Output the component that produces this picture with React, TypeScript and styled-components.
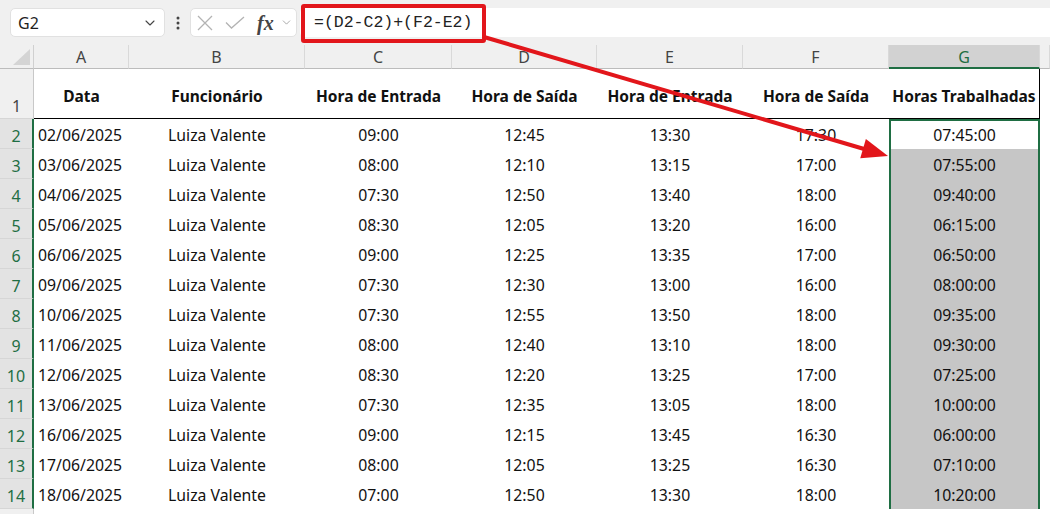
import React from "react";
import styled, { createGlobalStyle, css } from "styled-components";
import { ChevronDown } from "lucide-react";

const GlobalStyle = createGlobalStyle`
  html, body { margin: 0; padding: 0; background: #f0f0f0; }
  body { font-family: "Noto Sans", "Liberation Sans", sans-serif; overflow: hidden; }
  * { box-sizing: border-box; }
`;

const GREEN = "#1f6e43";

const Page = styled.div`
  position: relative;
  width: 1050px;
  height: 514px;
  overflow: hidden;
  background: #f0f0f0;
`;

const FormulaBar = styled.div`
  display: flex;
  align-items: center;
  height: 45px;
  padding: 8px 0 8px 10px;
`;

const NameBox = styled.div`
  display: flex;
  align-items: center;
  justify-content: space-between;
  width: 155px;
  height: 29px;
  background: #fff;
  border: 1px solid #e1e1e1;
  border-radius: 5px;
  padding: 0 6px 0 7px;
  font-size: 16px;
  color: #1f1f1f;
`;

const Dots = styled.div`
  width: 25px;
  display: flex;
  justify-content: center;
  color: #444;
`;

const FxBox = styled.div`
  display: flex;
  align-items: center;
  gap: 12px;
  width: 107px;
  height: 29px;
  background: #fff;
  border: 1px solid #e1e1e1;
  border-radius: 5px;
  padding: 0 3px 0 6px;
`;

const FxText = styled.span`
  font-family: "Liberation Serif", serif;
  font-style: italic;
  font-weight: bold;
  font-size: 20px;
  color: #444;
  line-height: 1;
  margin-right: -6px;
`;

const FormulaInput = styled.div`
  flex: 1;
  height: 29px;
  margin-left: 3px;
  background: #fff;
  border-radius: 5px 0 0 5px;
  display: flex;
  align-items: center;
  padding-left: 14px;
`;

const FormulaText = styled.span`
  font-family: "Liberation Mono", "DejaVu Sans Mono", monospace;
  font-size: 16.5px;
  color: #222;
`;

const Sheet = styled.div`
  display: grid;
  grid-template-columns: 34px 95px 176px 147px 145px 146px 146px 151px 1fr;
  grid-template-rows: 24px 50px repeat(14, 30px);
  background: #fff;
`;

const Corner = styled.div`
  background: #f0f0f0;
  border-right: 1px solid #d0d0d0;
  border-bottom: 1px solid #bcbcbc;
  display: flex;
  align-items: flex-end;
  justify-content: flex-end;
  padding: 0 3px 3px 0;
`;

const ColHead = styled.div<{ $sel?: boolean }>`
  background: ${(p) => (p.$sel ? "#d2d2d2" : "#f0f0f0")};
  color: ${(p) => (p.$sel ? GREEN : "#444")};
  border-right: 1px solid #d9d9d9;
  border-bottom: ${(p) => (p.$sel ? `2px solid ${GREEN}` : "1px solid #bcbcbc")};
  display: flex;
  align-items: center;
  justify-content: center;
  font-size: 16px;
  padding-top: 1px;
`;

const RowHead = styled.div<{ $sel?: boolean }>`
  background: ${(p) => (p.$sel ? "#e3e3e3" : "#f0f0f0")};
  color: ${(p) => (p.$sel ? GREEN : "#444")};
  border-right: ${(p) => (p.$sel ? `2px solid ${GREEN}` : "1px solid #c8c8c8")};
  border-bottom: 1px solid #d6d6d6;
  display: flex;
  align-items: flex-end;
  justify-content: center;
  font-size: 16px;
  line-height: 20px;
  padding-bottom: 2px;
`;

const Cell = styled.div<{
  $align?: "left" | "center";
  $head?: boolean;
  $sel?: "active" | "range";
  $first?: boolean;
  $last?: boolean;
}>`
  display: flex;
  align-items: ${(p) => (p.$head ? "center" : "flex-end")};
  justify-content: ${(p) => (p.$align === "left" ? "flex-start" : "center")};
  padding: ${(p) => (p.$head ? "4px 0 0 0" : "0 0 4px 0")};
  padding-left: ${(p) => (p.$align === "left" ? "4px" : "0")};
  font-size: ${(p) => (p.$head ? "15.5px" : "15.8px")};
  line-height: 20px;
  color: #111;
  white-space: nowrap;
  font-weight: ${(p) => (p.$head ? 700 : 400)};
  background: ${(p) => (p.$sel === "range" ? "#c6c6c6" : "#fff")};
  ${(p) => p.$head && css`border-bottom: 1px solid #000;`}
  ${(p) => p.$last && p.$head && css`border-right: 1px solid #000;`}
  ${(p) =>
    p.$sel &&
    css`
      box-shadow: inset 2px 0 0 ${GREEN}, inset -2px 0 0 ${GREEN}
        ${p.$first ? `, inset 0 2px 0 ${GREEN}` : ""};
    `}
`;

const Blank = styled.div`
  background: #fff;
`;

const Overlay = styled.svg`
  position: absolute;
  left: 0;
  top: 0;
  pointer-events: none;
`;

const RedBox = styled.div`
  position: absolute;
  left: 301px;
  top: 4px;
  width: 185px;
  height: 39px;
  border: 4px solid #e2161b;
  border-radius: 3px;
  pointer-events: none;
`;

const headers = [
  "Data",
  "Funcionário",
  "Hora de Entrada",
  "Hora de Saída",
  "Hora de Entrada",
  "Hora de Saída",
  "Horas Trabalhadas",
];

const rows: string[][] = [
  ["02/06/2025", "09:00", "12:45", "13:30", "17:30", "07:45:00"],
  ["03/06/2025", "08:00", "12:10", "13:15", "17:00", "07:55:00"],
  ["04/06/2025", "07:30", "12:50", "13:40", "18:00", "09:40:00"],
  ["05/06/2025", "08:30", "12:05", "13:20", "16:00", "06:15:00"],
  ["06/06/2025", "09:00", "12:25", "13:35", "17:00", "06:50:00"],
  ["09/06/2025", "07:30", "12:30", "13:00", "16:00", "08:00:00"],
  ["10/06/2025", "07:30", "12:55", "13:50", "18:00", "09:35:00"],
  ["11/06/2025", "08:00", "12:40", "13:10", "18:00", "09:30:00"],
  ["12/06/2025", "08:30", "12:20", "13:25", "17:00", "07:25:00"],
  ["13/06/2025", "07:30", "12:35", "13:05", "18:00", "10:00:00"],
  ["16/06/2025", "09:00", "12:15", "13:45", "16:30", "06:00:00"],
  ["17/06/2025", "08:00", "12:05", "13:25", "16:30", "07:10:00"],
  ["18/06/2025", "07:00", "12:50", "13:30", "18:00", "10:20:00"],
];

const cols = ["A", "B", "C", "D", "E", "F", "G"];

export default function App() {
  const sx = 484, sy = 37, tx = 888, ty = 156;
  const dx = tx - sx, dy = ty - sy;
  const len = Math.hypot(dx, dy);
  const ux = dx / len, uy = dy / len;
  const hl = 26, hw = 10;
  const bx = tx - ux * hl, by = ty - uy * hl;
  const p1 = `${bx - uy * hw},${by + ux * hw}`;
  const p2 = `${bx + uy * hw},${by - ux * hw}`;

  return (
    <Page>
      <GlobalStyle />
      <FormulaBar>
        <NameBox>
          <span>G2</span>
          <ChevronDown size={16} strokeWidth={1.6} color="#444" />
        </NameBox>
        <Dots>
          <svg width="4" height="16" viewBox="0 0 4 16">
            <circle cx="2" cy="3" r="1.5" fill="#444" />
            <circle cx="2" cy="8" r="1.5" fill="#444" />
            <circle cx="2" cy="13" r="1.5" fill="#444" />
          </svg>
        </Dots>
        <FxBox>
          <svg width="16" height="16" viewBox="0 0 16 16">
            <path d="M1 1 L15 15 M15 1 L1 15" stroke="#b3b3b3" strokeWidth="1.3" fill="none" />
          </svg>
          <svg width="20" height="13" viewBox="0 0 20 13">
            <path d="M1 6.5 L6.5 12 L19 1" stroke="#b3b3b3" strokeWidth="1.3" fill="none" />
          </svg>
          <FxText>fx</FxText>
          <ChevronDown size={13} strokeWidth={1.3} color="#888" />
        </FxBox>
        <FormulaInput>
          <FormulaText>=(D2-C2)+(F2-E2)</FormulaText>
        </FormulaInput>
      </FormulaBar>

      <Sheet>
        <Corner>
          <svg width="17" height="16" viewBox="0 0 17 16">
            <polygon points="0,16 17,16 17,0" fill="#d4d4d4" />
          </svg>
        </Corner>
        {cols.map((c) => (
          <ColHead key={c} $sel={c === "G"}>
            {c}
          </ColHead>
        ))}
        <ColHead />

        <RowHead>1</RowHead>
        {headers.map((h, i) => (
          <Cell key={i} $head $last={i === 6}>
            {h}
          </Cell>
        ))}
        <Blank />

        {rows.map((r, ri) => (
          <React.Fragment key={ri}>
            <RowHead $sel>{ri + 2}</RowHead>
            <Cell $align="left">{r[0]}</Cell>
            <Cell>Luiza Valente</Cell>
            <Cell>{r[1]}</Cell>
            <Cell>{r[2]}</Cell>
            <Cell>{r[3]}</Cell>
            <Cell>{r[4]}</Cell>
            <Cell $sel={ri === 0 ? "active" : "range"} $first={ri === 0}>
              {r[5]}
            </Cell>
            <Blank />
          </React.Fragment>
        ))}
        <RowHead />
        {cols.map((c) => (
          <Blank key={c} />
        ))}
        <Blank />
      </Sheet>

      <RedBox />
      <Overlay width="1050" height="514" viewBox="0 0 1050 514">
        <line x1={sx} y1={sy} x2={bx + ux * 2} y2={by + uy * 2} stroke="#e2161b" strokeWidth="4" />
        <polygon points={`${tx},${ty} ${p1} ${p2}`} fill="#e2161b" />
      </Overlay>
    </Page>
  );
}
